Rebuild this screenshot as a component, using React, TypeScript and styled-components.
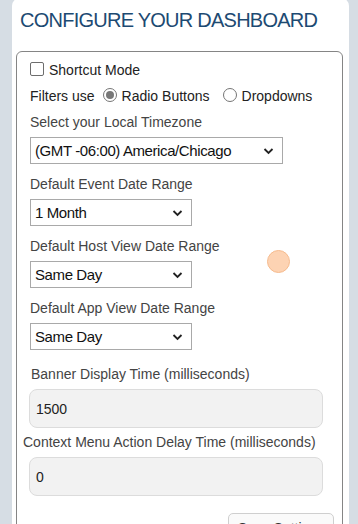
import React from 'react';
import styled, { createGlobalStyle } from 'styled-components';

const GlobalStyle = createGlobalStyle`
  html, body {
    margin: 0;
    padding: 0;
    background: #d6dde4;
    font-family: 'Liberation Sans', Arial, sans-serif;
  }
`;

const Page = styled.div`
  position: relative;
  width: 358px;
  height: 524px;
  overflow: hidden;
  padding: 0 9px 0 12px;
  box-sizing: border-box;
`;

const Panel = styled.div`
  background: #ffffff;
  border-radius: 8px 8px 0 0;
  padding: 9px 6px 0 4px;
  height: 540px;
  margin-top: -2px;
`;

const Title = styled.h1`
  margin: 0 0 0 4px;
  font-size: 20px;
  letter-spacing: -0.75px;
  line-height: 24px;
  font-weight: 400;
  color: #1d4a72;
  height: 44px;
  padding-top: 1px;
  box-sizing: border-box;
`;

const Box = styled.div`
  border: 1px solid #858585;
  border-radius: 6px;
  padding: 10px 8px 0 13px;
  height: 500px;
  box-sizing: border-box;
`;

const Row = styled.div<{ gap?: number }>`
  display: flex;
  align-items: center;
  font-size: 14px;
  color: #222;
  height: 16px;
  margin-bottom: ${(p) => p.gap ?? 0}px;
`;

const Check = styled.span`
  width: 12px;
  height: 12px;
  border: 1px solid #6d6d6d;
  border-radius: 2px;
  margin-right: 5px;
  margin-top: -3px;
  box-sizing: content-box;
`;

const Radio = styled.span<{ on?: boolean; lead: number }>`
  width: 12px;
  height: 12px;
  border: 1px solid #757575;
  border-radius: 50%;
  margin: -2px 5px 0 ${(p) => p.lead}px;
  display: inline-flex;
  align-items: center;
  justify-content: center;
  &::after {
    content: '';
    display: ${(p) => (p.on ? 'block' : 'none')};
    width: 8px;
    height: 8px;
    border-radius: 50%;
    background: #777;
  }
`;

const Label = styled.div<{ indent?: number; top?: number }>`
  font-size: 14px;
  line-height: 16px;
  color: #444;
  padding-top: ${(p) => p.top ?? 0}px;
  margin: 0 0 7px ${(p) => p.indent ?? 0}px;
`;

const SelectBox = styled.div<{ w: number }>`
  position: relative;
  width: ${(p) => p.w}px;
  height: 27px;
  border: 1px solid #a9a9a9;
  box-sizing: border-box;
  display: flex;
  align-items: center;
  padding-left: 4px;
  font-size: 15px;
  letter-spacing: -0.4px;
  color: #111;
  margin-bottom: 12px;
`;

const Chevron = styled.svg`
  position: absolute;
  right: 8px;
  top: 9px;
`;

const Field = styled.div`
  width: 294px;
  height: 39px;
  margin-left: -1px;
  background: #f2f2f2;
  border: 1px solid #dcdcdc;
  border-radius: 8px;
  box-sizing: border-box;
  display: flex;
  align-items: center;
  padding-left: 6px;
  font-size: 14px;
  color: #222;
  margin-bottom: 6px;
`;

const Footer = styled.div`
  display: flex;
  justify-content: flex-end;
  margin-top: 17px;
`;

const Button = styled.button`
  width: 106px;
  height: 32px;
  border: 1px solid #cfcfcf;
  border-radius: 5px;
  background: #fafafa;
  font-family: inherit;
  font-size: 14px;
  color: #333;
  padding-bottom: 4px;
`;

const Cursor = styled.div`
  position: absolute;
  left: 267px;
  top: 250px;
  width: 21px;
  height: 21px;
  border-radius: 50%;
  background: #fdd3b3;
  border: 1px solid #f6bb8e;
`;

const Select: React.FC<{ w: number; value: string }> = ({ w, value }) => (
  <SelectBox w={w}>
    {value}
    <Chevron width="11" height="8" viewBox="0 0 11 8">
      <path d="M1.5 2 L5.5 6 L9.5 2" fill="none" stroke="#222" strokeWidth="1.8" />
    </Chevron>
  </SelectBox>
);

export default function App() {
  return (
    <Page>
      <GlobalStyle />
      <Panel>
        <Title>CONFIGURE YOUR DASHBOARD</Title>
        <Box>
          <Row gap={10}>
            <Check />
            Shortcut Mode
          </Row>
          <Row gap={10}>
            Filters use
            <Radio on lead={8} />
            Radio Buttons
            <Radio lead={13} />
            Dropdowns
          </Row>
          <Label>Select your Local Timezone</Label>
          <Select w={253} value="(GMT -06:00) America/Chicago" />
          <Label>Default Event Date Range</Label>
          <Select w={162} value="1 Month" />
          <Label>Default Host View Date Range</Label>
          <Select w={162} value="Same Day" />
          <Label>Default App View Date Range</Label>
          <Select w={162} value="Same Day" />
          <Label indent={1} top={4}>Banner Display Time (milliseconds)</Label>
          <Field>1500</Field>
          <Label indent={-7}>Context Menu Action Delay Time (milliseconds)</Label>
          <Field>0</Field>
          <Footer>
            <Button>Save Settings</Button>
          </Footer>
        </Box>
      </Panel>
      <Cursor />
    </Page>
  );
}
